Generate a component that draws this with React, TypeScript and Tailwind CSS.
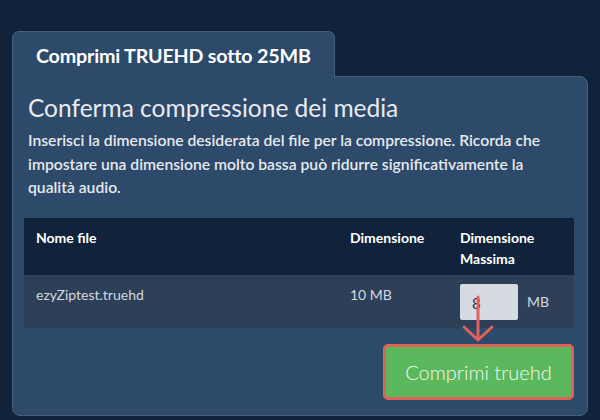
export default function App() {
  return (
    <div
      className="relative w-[600px] h-[420px] overflow-hidden bg-[#11233a] pt-[31px] px-[12px]"
      style={{ fontFamily: "Lato, 'Noto Sans', sans-serif" }}
    >
      {/* tab */}
      <div className="w-[323px] h-[46px] -mb-px relative z-10 rounded-t-[7px] border border-b-0 border-[#46607e] bg-[#2d4a6a] pl-[23px] pt-[9px]">
        <span className="text-[19.7px] font-bold text-white tracking-[-0.2px]">
          Comprimi TRUEHD sotto 25MB
        </span>
      </div>

      {/* panel */}
      <div className="w-[576px] h-[340px] rounded-b-[8px] rounded-tr-[8px] border border-[#46607e] bg-[#2d4a6a] px-[11px] pt-[16px]">
        <h2 className="pl-[4px] text-[24.5px] leading-[30px] text-[#e8ebef]">
          Conferma compressione dei media
        </h2>
        <p className="mt-[6px] pl-[4px] pr-[6px] text-[15.7px] leading-[23.5px] font-semibold text-[#e6e9ee]">
          Inserisci la dimensione desiderata del file per la compressione. Ricorda che
          impostare una dimensione molto bassa può ridurre significativamente la
          qualità audio.
        </p>

        <table className="mt-[18px] w-[550px] table-fixed border-collapse text-[14px]">
          <thead>
            <tr className="bg-[#11233a] h-[57px] align-top text-white font-bold">
              <th className="w-[314px] text-left pl-[12px] pt-[9px] leading-[21px]">
                Nome file
              </th>
              <th className="w-[110px] text-left pl-[12px] pt-[9px] leading-[21px]">
                Dimensione
              </th>
              <th className="text-left pl-[12px] pt-[9px] leading-[21px]">
                Dimensione
                <br />
                Massima
              </th>
            </tr>
          </thead>
          <tbody>
            <tr className="bg-[#2e4058] h-[53px] align-top text-[#d3d8df]">
              <td className="pl-[12px] pt-[9px]">ezyZiptest.truehd</td>
              <td className="pl-[12px] pt-[9px]">10 MB</td>
              <td className="pl-[12px] pt-[9px]">
                <div className="flex items-center gap-[9px]">
                  <div className="w-[58px] h-[36px] rounded-[2px] bg-[#d6dbe3] pl-[12px] pt-[3px] flex items-center text-[15px] text-[#1f2937]">
                    8
                  </div>
                  <span className="text-[#d3d8df]">MB</span>
                </div>
              </td>
            </tr>
          </tbody>
        </table>

        <div className="flex justify-end w-[550px] mt-[16px]">
          <button className="w-[191px] h-[56px] rounded-[5px] border-[3px] border-[#e0605a] bg-[#5cb85c] text-[20px] font-light text-[#f4f7f4]">
            Comprimi truehd
          </button>
        </div>
      </div>

      {/* annotation arrow */}
      <svg
        className="absolute left-[460px] top-[295px]"
        width="36"
        height="48"
        viewBox="0 0 36 48"
        fill="none"
        stroke="#e0605a"
        strokeWidth="3"
        strokeLinecap="round"
        strokeLinejoin="round"
      >
        <path d="M18 2 V44" />
        <path d="M4 32 L18 45 L32 32" />
      </svg>
    </div>
  );
}
